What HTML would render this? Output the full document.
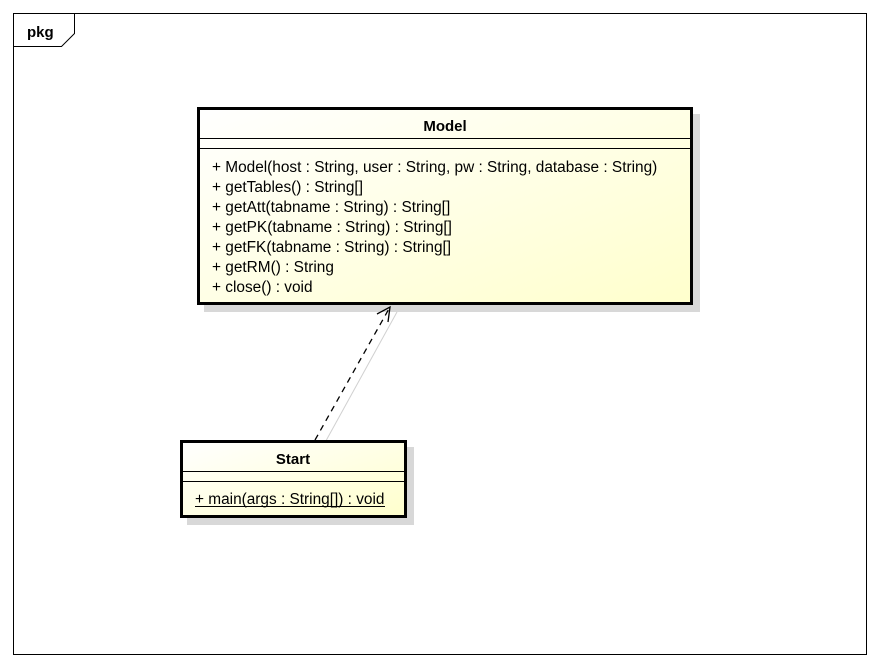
<!DOCTYPE html>
<html><head><meta charset="utf-8">
<style>
html,body{margin:0;padding:0;background:#fff;}
svg{display:block;}
text{font-family:"Liberation Sans",Arial,sans-serif;font-size:15.4px;fill:#000;}
</style></head>
<body>
<svg width="880" height="666" viewBox="0 0 880 666" xmlns="http://www.w3.org/2000/svg">
<defs>
<linearGradient id="g" x1="0" y1="0" x2="1" y2="1">
<stop offset="0" stop-color="#ffffff"/>
<stop offset="1" stop-color="#ffffcc"/>
</linearGradient>
</defs>
<rect x="13.5" y="13.5" width="853" height="641" fill="none" stroke="#000" stroke-width="1"/>
<path d="M13.5 46.5 H61.5 L74.5 33.5 V13.5" fill="none" stroke="#000" stroke-width="1"/>
<text x="27" y="37" font-weight="bold" style="font-size:15px">pkg</text>

<!-- Model -->
<rect x="204" y="114" width="496" height="198" fill="#d8d8d8"/>
<rect x="198.5" y="108.5" width="493" height="195" fill="url(#g)" stroke="#000" stroke-width="3"/>
<line x1="199" y1="138.5" x2="691" y2="138.5" stroke="#000" stroke-width="1"/>
<line x1="199" y1="148.5" x2="691" y2="148.5" stroke="#000" stroke-width="1"/>
<text x="445" y="131" text-anchor="middle" font-weight="bold" style="font-size:15px">Model</text>
<text x="212" y="172">+ Model(host : String, user : String, pw : String, database : String)</text>
<text x="212" y="192">+ getTables() : String[]</text>
<text x="212" y="212">+ getAtt(tabname : String) : String[]</text>
<text x="212" y="232">+ getPK(tabname : String) : String[]</text>
<text x="212" y="252">+ getFK(tabname : String) : String[]</text>
<text x="212" y="272">+ getRM() : String</text>
<text x="212" y="292">+ close() : void</text>

<!-- dependency -->
<line x1="397" y1="312" x2="322" y2="448" stroke="#d0d0d0" stroke-width="1"/>
<line x1="315" y1="440" x2="390" y2="307" stroke="#000" stroke-width="1.3" stroke-dasharray="6,5"/>
<path d="M377 314 L390 307 L388 322" fill="none" stroke="#000" stroke-width="1.3"/>

<!-- Start -->
<rect x="187" y="447" width="227" height="78" fill="#d8d8d8"/>
<rect x="181.5" y="441.5" width="224" height="75" fill="url(#g)" stroke="#000" stroke-width="3"/>
<line x1="182" y1="471.5" x2="405" y2="471.5" stroke="#000" stroke-width="1"/>
<line x1="182" y1="481.5" x2="405" y2="481.5" stroke="#000" stroke-width="1"/>
<text x="293" y="464" text-anchor="middle" font-weight="bold" style="font-size:15px">Start</text>
<text x="195" y="504">+ main(args : String[]) : void</text>
<line x1="195" y1="506.5" x2="385" y2="506.5" stroke="#000" stroke-width="1"/>
</svg>
</body></html>
